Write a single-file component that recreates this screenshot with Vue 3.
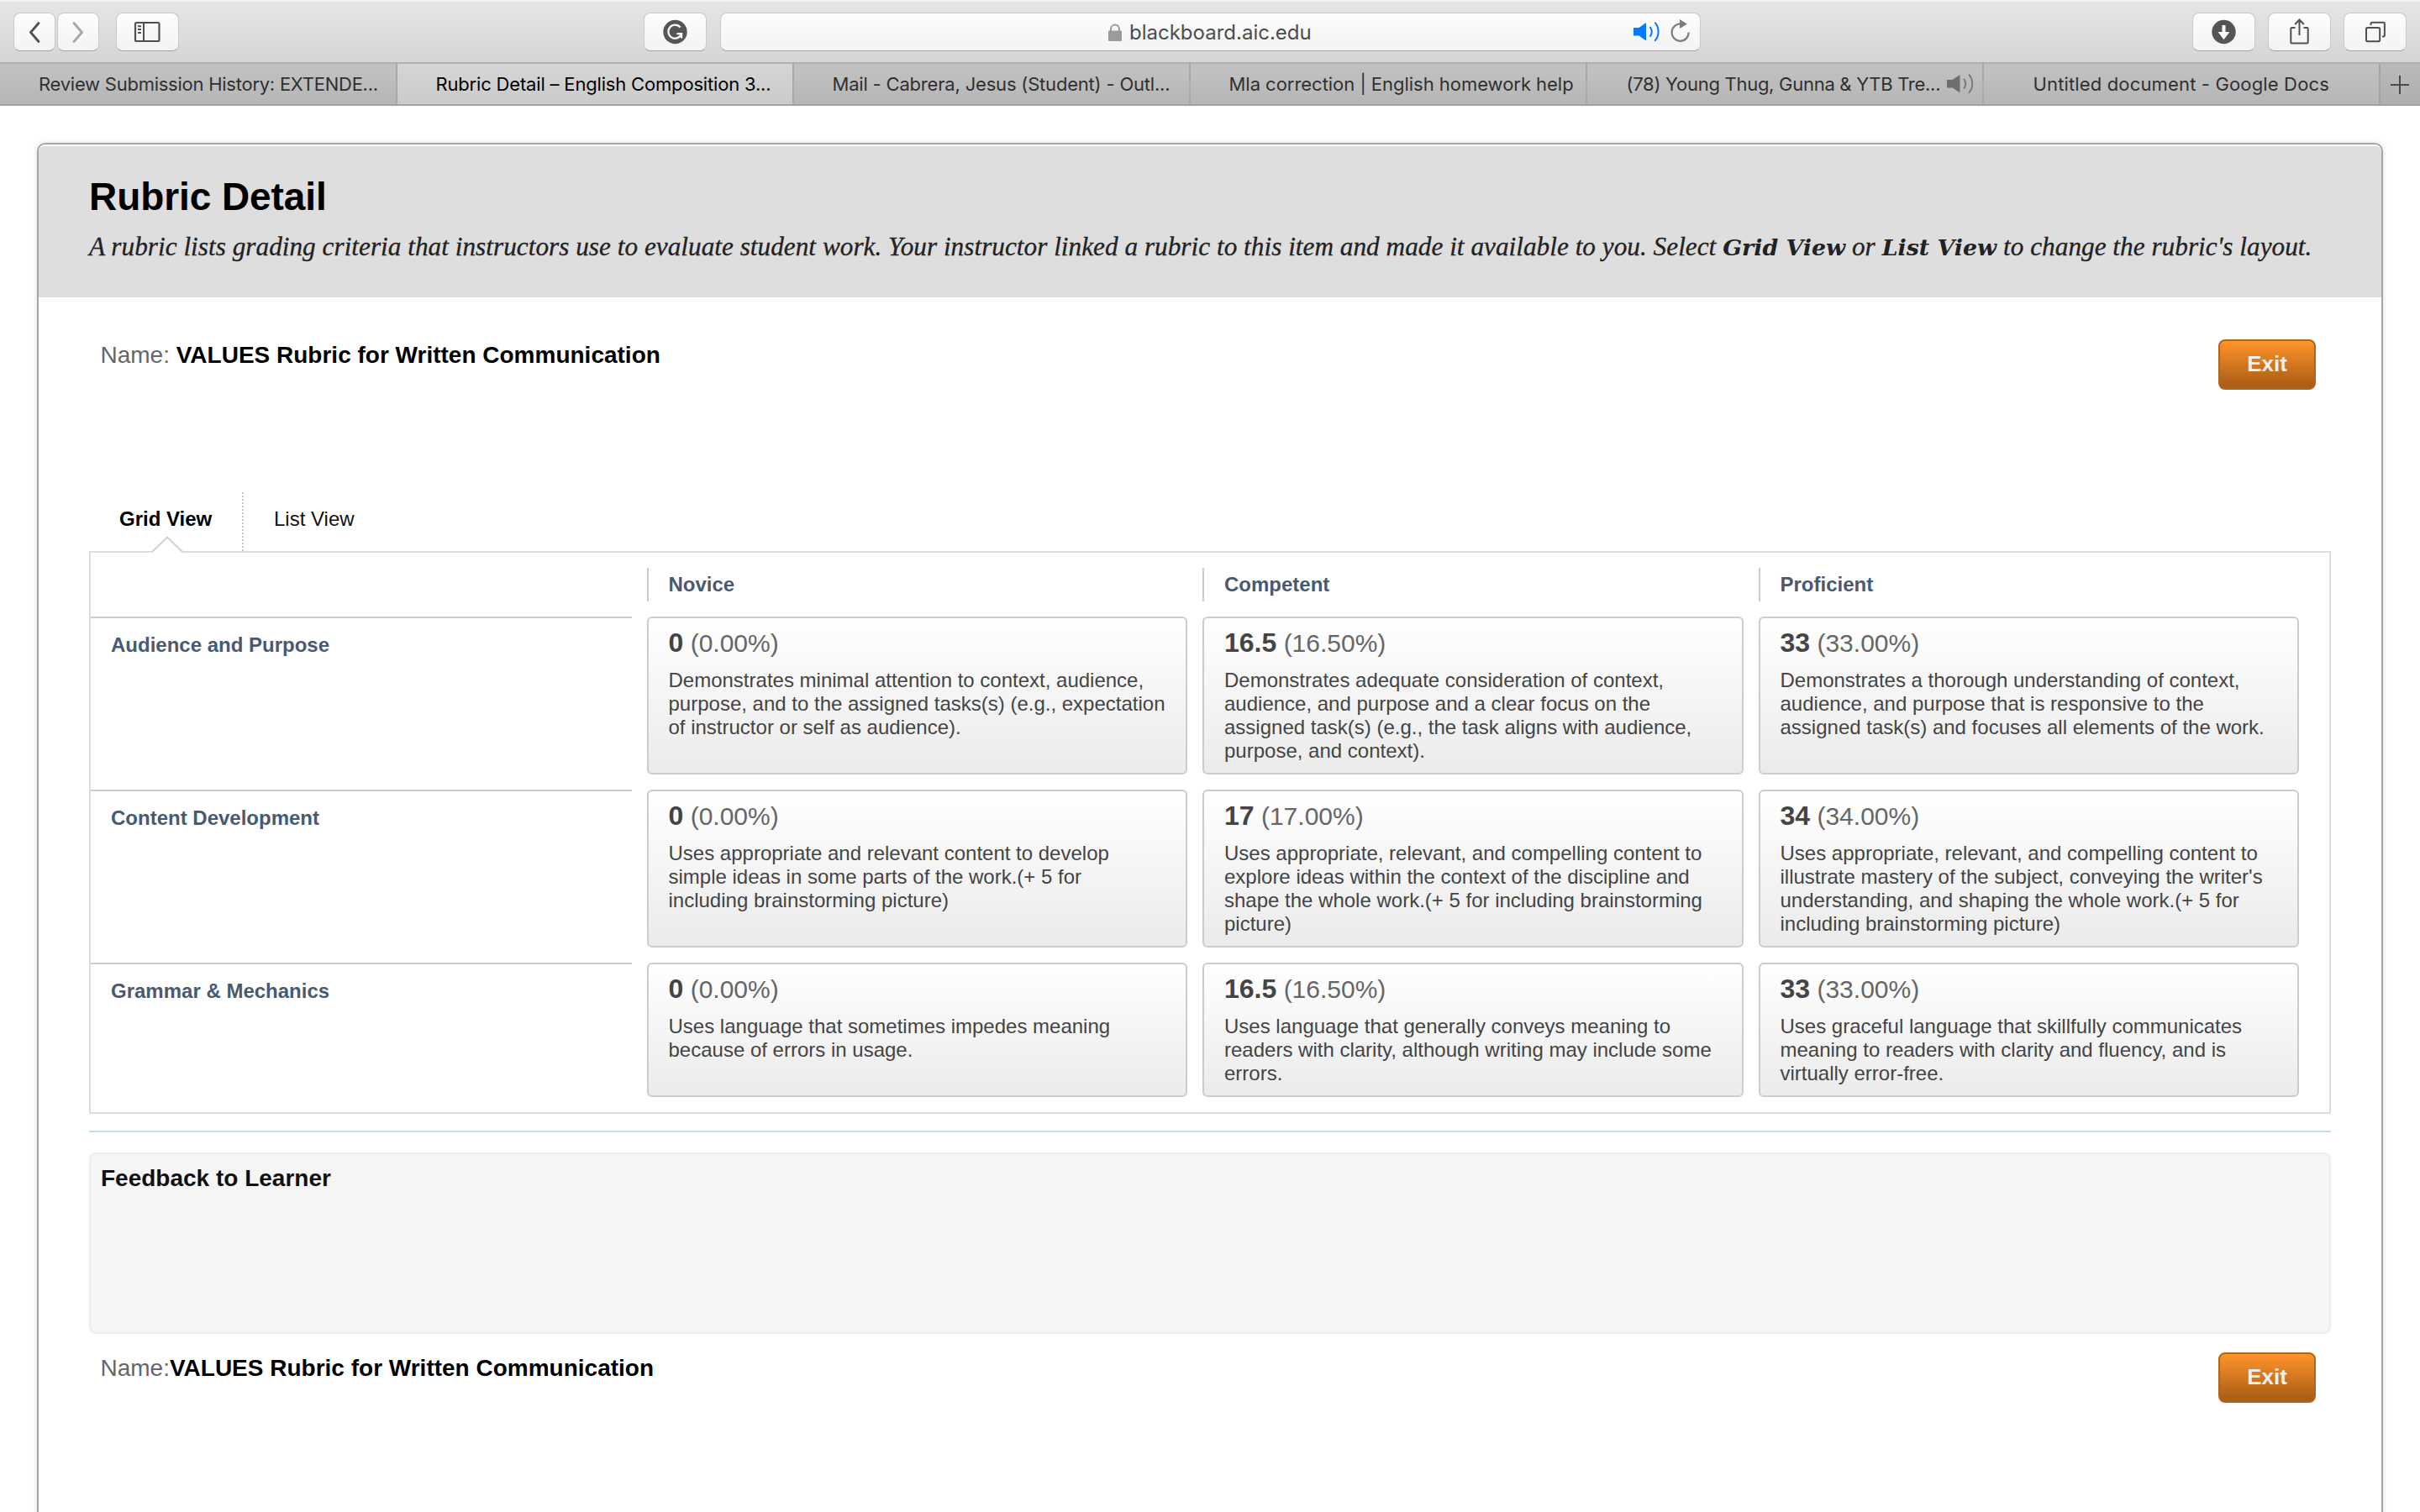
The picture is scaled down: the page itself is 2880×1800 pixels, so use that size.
<script setup>
const browserTabs = [
  { title: 'Review Submission History: EXTENDE...', inset: 46, spacing: -0.25 },
  { title: 'Rubric Detail – English Composition 3...', inset: 46, spacing: -0.18, active: true },
  { title: 'Mail - Cabrera, Jesus (Student) - Outl...', inset: 46, spacing: -0.19 },
  { title: 'Mla correction | English homework help', inset: 46, spacing: -0.03 },
  { title: '(78) Young Thug, Gunna & YTB Tre...', inset: 47, spacing: -0.28, audio: true },
  { title: 'Untitled document - Google Docs', inset: 59, spacing: 0.15 },
]

const rubricName = 'VALUES Rubric for Written Communication'

const levels = ['Novice', 'Competent', 'Proficient']

const criteria = [
  {
    name: 'Audience and Purpose',
    cells: [
      { points: '0', percent: '(0.00%)', text: 'Demonstrates minimal attention to context, audience, purpose, and to the assigned tasks(s) (e.g., expectation of instructor or self as audience).' },
      { points: '16.5', percent: '(16.50%)', text: 'Demonstrates adequate consideration of context, audience, and purpose and a clear focus on the assigned task(s) (e.g., the task aligns with audience, purpose, and context).' },
      { points: '33', percent: '(33.00%)', text: 'Demonstrates a thorough understanding of context, audience, and purpose that is responsive to the assigned task(s) and focuses all elements of the work.' },
    ],
  },
  {
    name: 'Content Development',
    cells: [
      { points: '0', percent: '(0.00%)', text: 'Uses appropriate and relevant content to develop simple ideas in some parts of the work.(+ 5 for\nincluding brainstorming picture)' },
      { points: '17', percent: '(17.00%)', text: 'Uses appropriate, relevant, and compelling content to explore ideas within the context of the discipline and shape the whole work.(+ 5 for including brainstorming picture)' },
      { points: '34', percent: '(34.00%)', text: "Uses appropriate, relevant, and compelling content to illustrate mastery of the subject, conveying the writer's understanding, and shaping the whole work.(+ 5 for including brainstorming picture)" },
    ],
  },
  {
    name: 'Grammar & Mechanics',
    cells: [
      { points: '0', percent: '(0.00%)', text: 'Uses language that sometimes impedes meaning because of errors in usage.' },
      { points: '16.5', percent: '(16.50%)', text: 'Uses language that generally conveys meaning to readers with clarity, although writing may include some errors.' },
      { points: '33', percent: '(33.00%)', text: 'Uses graceful language that skillfully communicates meaning to readers with clarity and fluency, and is virtually error-free.' },
    ],
  },
]
</script>

<template>
  <div class="window">
    <header class="toolbar">
      <div class="tool back">
        <svg width="50" height="46" viewBox="0 0 50 46"><path d="M30 12.5 20.5 23.5 30 34.5" class="stroke" stroke-width="2.8" stroke-linecap="round" /></svg>
      </div>
      <div class="tool forward">
        <svg width="50" height="46" viewBox="0 0 50 46"><path d="M20 12.5 29.5 23.5 20 34.5" class="stroke faded" stroke-width="2.8" stroke-linecap="round" /></svg>
      </div>
      <div class="tool sidebar">
        <svg width="75" height="46" viewBox="0 0 75 46">
          <rect x="23" y="12" width="28.5" height="22" rx="1.5" class="stroke" stroke-width="2.2" />
          <path d="M33 12v22M26 16.2h4M26 20h4M26 24h4" class="stroke" stroke-width="2" />
        </svg>
      </div>
      <div class="tool grammar">
        <svg width="75" height="46" viewBox="0 0 75 46">
          <circle cx="37.5" cy="23" r="14.2" fill="#555" />
          <path d="M43.6 17.6A8 8 0 1 0 45 25.2H39.4M45 24.6v6" fill="none" stroke="#f8f8f8" stroke-width="2.3" />
        </svg>
      </div>
      <div class="address">
        <div class="site">
          <svg width="16" height="22" viewBox="0 0 16 22"><rect y="8.5" width="16" height="12.5" rx="1" fill="#9b9b9b" /><path d="M3 9V6.500a5 5 0 0 1 10 0v2.500" fill="none" stroke="#9b9b9b" stroke-width="2" /></svg>
          <span>blackboard.aic.edu</span>
        </div>
        <svg class="sound" width="34" height="26" viewBox="0 0 34 26">
          <path d="M0 8h6.500L15 2v21.500L6.500 17.500H0z" fill="#007aff" />
          <path d="M20 7.500a9.500 9.500 0 0 1 0 10.500M25.800 2.200a16.500 16.500 0 0 1 0 21" fill="none" stroke="#007aff" stroke-width="2" stroke-linecap="round" />
        </svg>
        <svg class="reload" width="26" height="30" viewBox="0 0 26 30">
          <path d="M13.500 6.500A10 10.200 0 1 0 22.600 16.500" fill="none" stroke="#7d7d7d" stroke-width="2.200" />
          <path d="M12 1v11l8.800-5.500z" fill="#7d7d7d" />
        </svg>
      </div>
      <div class="tool download">
        <svg width="75" height="46" viewBox="0 0 75 46">
          <circle cx="37.500" cy="23" r="14.200" fill="#555" />
          <path d="M35.500 15h4v8h5L37.500 32.200 30.500 23h5z" fill="#fff" />
        </svg>
      </div>
      <div class="tool share">
        <svg width="75" height="46" viewBox="0 0 75 46">
          <path d="M32.500 18h-4a1.200 1.200 0 0 0-1.200 1.200v16.100a1.200 1.200 0 0 0 1.200 1.200h18a1.200 1.200 0 0 0 1.200-1.200v-16.100a1.200 1.200 0 0 0-1.200-1.200h-4M37.500 27V8.500M32.200 14l5.300-5.500 5.300 5.500" class="stroke" stroke-width="2" />
        </svg>
      </div>
      <div class="tool stack">
        <svg width="75" height="46" viewBox="0 0 75 46">
          <rect x="27" y="18" width="16.200" height="16.200" rx="1.800" class="stroke" stroke-width="2" />
          <path d="M32.500 15v-2a1.200 1.200 0 0 1 1.200-1.200h14a1.200 1.200 0 0 1 1.200 1.200v14.200a1.200 1.200 0 0 1-1.200 1.200h-1.700" class="stroke" stroke-width="2" />
        </svg>
      </div>
    </header>

    <nav class="tabbar">
      <div v-for="t in browserTabs" :key="t.title" class="btab" :class="{ active: t.active }" :style="{ paddingLeft: t.inset + 'px' }">
        <span :style="{ letterSpacing: t.spacing + 'px' }">{{ t.title }}</span>
        <svg v-if="t.audio" width="34" height="26" viewBox="0 0 34 26">
          <path d="M0 8h6.500L15.500 2v21.500L6.500 17.500H0z" fill="#6e6e6e" />
          <path d="M20.500 7.500a9.500 9.500 0 0 1 0 10.500M26.500 2.200a16.500 16.500 0 0 1 0 21" fill="none" stroke="#7c7c7c" stroke-width="2" stroke-linecap="round" />
        </svg>
      </div>
      <div class="newtab">
        <svg width="22" height="22" viewBox="0 0 22 22"><path d="M11 0v22M0 11h22" stroke="#4a4a4a" stroke-width="2" /></svg>
      </div>
    </nav>

    <main class="page">
      <div class="panel">
        <div class="panel-head">
          <h1>Rubric Detail</h1>
          <p>A rubric lists grading criteria that instructors use to evaluate student work. Your instructor linked a rubric to this item and made it available to you. Select <b>Grid View</b> or <b>List View</b> to change the rubric's layout.</p>
        </div>
        <div class="content">
          <div class="name-row first">
            <div class="name">Name: <b>{{ rubricName }}</b></div>
            <button class="exit">Exit</button>
          </div>

          <div class="views">
            <div class="view current">
              Grid View
              <svg class="pointer" width="38" height="21" viewBox="0 0 38 21">
                <path d="M1 19 19 1.500 37 19V21H1z" fill="#fff" />
                <path d="M1 19 19 1.500 37 19" fill="none" stroke="#cfcfcf" stroke-width="1.800" />
              </svg>
            </div>
            <div class="view">List View</div>
          </div>

          <section class="grid">
            <div></div>
            <div v-for="l in levels" :key="l" class="level">{{ l }}</div>
            <template v-for="c in criteria" :key="c.name">
              <div class="criterion">{{ c.name }}</div>
              <div v-for="(cell, i) in c.cells" :key="i" class="card">
                <div class="score"><b>{{ cell.points }}</b> <span>{{ cell.percent }}</span></div>
                <div class="text">{{ cell.text }}</div>
              </div>
            </template>
          </section>

          <div class="rule"></div>
          <section class="feedback">Feedback to Learner</section>

          <div class="name-row last">
            <div class="name">Name:<b>{{ rubricName }}</b></div>
            <button class="exit">Exit</button>
          </div>
        </div>
      </div>
    </main>
  </div>
</template>

<style>
body {
  background: #fff;
}
</style>

<style scoped>
* {
  box-sizing: border-box;
}
.window {
  width: 2880px;
  height: 1800px;
  overflow: hidden;
  display: flex;
  flex-direction: column;
  background: #fff;
  font-family: "Liberation Sans", Arial, sans-serif;
}
svg {
  display: block;
  flex: none;
}
.stroke {
  fill: none;
  stroke: #505050;
}
.stroke.faded {
  stroke: #a6a6a6;
}

/* Browser toolbar */
.toolbar {
  flex: none;
  height: 76px;
  padding: 15px 16px 0 15.500px;
  display: flex;
  align-items: flex-start;
  background: linear-gradient(#e6e6e6, #d5d5d5);
  border-bottom: 2px solid #b1b1b1;
  box-shadow: inset 0 2px 0 #f3f3f3;
}
.tool {
  flex: none;
  width: 75px;
  height: 46px;
  border: 1px solid #cacaca;
  border-bottom-color: #a6a6a6;
  border-radius: 8px;
  background: linear-gradient(#fdfdfd, #f3f3f3);
}
.tool svg {
  margin: -1px;
}
.back,
.forward {
  width: 50px;
}
.forward {
  margin-left: 2px;
}
.sidebar {
  margin-left: 20px;
}
.grammar {
  margin-left: 553.500px;
}
.address {
  flex: none;
  width: 1167px;
  height: 46px;
  margin-left: 15.500px;
  padding-right: 10px;
  display: flex;
  align-items: center;
  border: 1px solid #cacaca;
  border-bottom-color: #a6a6a6;
  border-radius: 8px;
  background: linear-gradient(#fdfdfd, #f3f3f3);
  font: 24px/44px Inter, sans-serif;
  color: #4c4c4c;
}
.site {
  flex: 1;
  display: flex;
  align-items: center;
  gap: 9px;
  padding: 1px 0 0 461.500px;
}
.sound {
  margin-right: 9px;
}
.reload {
  margin-top: -3px;
}
.download {
  margin-left: auto;
}
.share,
.stack {
  margin-left: 15px;
}

/* Browser tabs */
.tabbar {
  flex: none;
  height: 50px;
  display: flex;
  border-bottom: 2px solid #a2a2a2;
  background: linear-gradient(#c2c2c2, #b6b6b6);
  font: 22px/48px Inter, sans-serif;
  color: #303030;
}
.btab {
  flex: none;
  width: 472px;
  display: flex;
  align-items: center;
  border-left: 2px solid #a9a9a9;
  white-space: nowrap;
}
.btab:first-child {
  width: 470.500px;
  border-left: 0;
}
.btab.active {
  background: linear-gradient(#d5d5d5, #cbcbcb);
  color: #000;
}
.btab svg {
  margin-left: 8px;
}
.newtab {
  flex: 1;
  display: flex;
  align-items: center;
  padding: 2px 0 0 12px;
  border-left: 2px solid #a4a4a4;
  background: linear-gradient(#bababa, #aeaeae);
}

/* Page */
.page {
  flex: 1;
  padding: 44px 44px 0;
}
.panel {
  height: 1700px;
  border: 2px solid #a6a6a6;
  border-radius: 10px;
  background: #fff;
  box-shadow: 0 0 6px rgba(0, 0, 0, 0.13);
  overflow: hidden;
}
.panel-head {
  height: 182px;
  padding: 34px 60px 0;
  border-top: 2px solid #f7f7f7;
  border-radius: 8px 8px 0 0;
  background: #dedede;
}
h1 {
  margin: 0;
  font-size: 46px;
  line-height: 52px;
  color: #000;
  letter-spacing: -0.080px;
}
.panel-head p {
  margin: 14px 0 0;
  font: italic 31.250px/40px "Liberation Serif", "Times New Roman", serif;
  letter-spacing: 0.015px;
  color: #222;
  white-space: nowrap;
  -webkit-text-stroke: 0.300px #222;
}
.panel-head p b {
  font: italic bold 26.800px/1 "DejaVu Serif", serif;
  -webkit-text-stroke: 0;
}
.content {
  padding: 0 60px;
  display: flex;
  flex-direction: column;
}
.name-row {
  height: 60px;
  padding: 0 18px 0 13.500px;
  display: flex;
  justify-content: space-between;
  align-items: flex-start;
}
.name-row.first {
  margin-top: 50px;
}
.name-row.last {
  margin-top: 22px;
}
.name {
  margin-top: 3px;
  font-size: 28px;
  line-height: 32px;
  color: #666;
}
.name b {
  color: #000;
}
.exit {
  width: 116px;
  height: 60px;
  padding: 0 0 2px;
  border: 2px solid #b0641c;
  border-radius: 8px;
  background: linear-gradient(#ff942a, #ad5f18 92%);
  color: #efefef;
  font: bold 26px/54px "Liberation Sans", Arial, sans-serif;
  text-align: center;
}

/* View switch */
.views {
  height: 70px;
  margin-top: 122px;
  display: flex;
}
.view {
  height: 70px;
  padding: 18px 0 0 36px;
  font-size: 24px;
  line-height: 28px;
  color: #111;
}
.view.current {
  position: relative;
  width: 184px;
  font-weight: bold;
  color: #000;
  background: repeating-linear-gradient(#c4c4c4 0 2px, transparent 2px 4px) right / 2px 100% no-repeat;
}
.pointer {
  position: absolute;
  left: 74px;
  top: 51.500px;
}

/* Rubric grid */
.grid {
  display: grid;
  grid-template-columns: repeat(4, 1fr);
  gap: 18px;
  padding: 18px 36px 18px 0;
  border: 2px solid #dcdcdc;
}
.level {
  height: 40px;
  padding-left: 24px;
  border-left: 2px solid #ccc;
  font-size: 24px;
  font-weight: bold;
  line-height: 40px;
  color: #475a73;
}
.criterion {
  padding: 18px 0 0 24px;
  border-top: 2px solid #ccc;
  font-size: 24px;
  font-weight: bold;
  line-height: 28px;
  color: #475a73;
}
.card {
  padding: 11px 22px 12px 24px;
  border: 2px solid #ccc;
  border-radius: 6px;
  background: linear-gradient(#fff, #ebebeb);
}
.score {
  height: 36px;
  font-size: 30px;
  line-height: 36px;
  color: #666;
}
.score b {
  font-size: 32px;
  color: #444;
}
.text {
  margin-top: 13px;
  font-size: 24px;
  line-height: 28px;
  color: #444;
  white-space: pre-line;
}

.rule {
  height: 2px;
  margin-top: 20px;
  background: #b9e2ea;
}
.feedback {
  height: 216px;
  margin-top: 24px;
  padding: 13px 12px;
  border: 2px solid #ececec;
  border-radius: 8px;
  background: #f5f5f5;
  font-size: 28px;
  font-weight: bold;
  line-height: 32px;
  color: #111;
}
</style>
